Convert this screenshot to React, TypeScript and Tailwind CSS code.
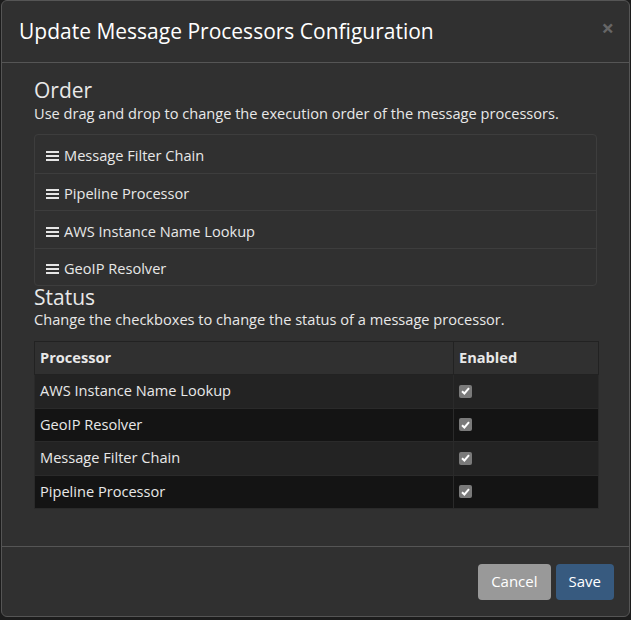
import React from "react";

const ORDER = ["Message Filter Chain", "Pipeline Processor", "AWS Instance Name Lookup", "GeoIP Resolver"];
const STATUS = ["AWS Instance Name Lookup", "GeoIP Resolver", "Message Filter Chain", "Pipeline Processor"];

function Bars() {
  return (
    <svg width="13" height="12" viewBox="0 0 13 12" className="shrink-0">
      <rect x="0" y="1" width="13" height="2" fill="#e5e5e5" />
      <rect x="0" y="5" width="13" height="2" fill="#e5e5e5" />
      <rect x="0" y="9" width="13" height="2" fill="#e5e5e5" />
    </svg>
  );
}

function Check() {
  return (
    <span className="flex h-[13px] w-[13px] items-center justify-center rounded-[2px] bg-[#7a7a7a]">
      <svg width="9" height="8" viewBox="0 0 9 8">
        <path d="M1 4.2 L3.4 6.5 L8 1.2" stroke="#fff" strokeWidth="2" fill="none" />
      </svg>
    </span>
  );
}

export default function App() {
  return (
    <div className="h-[620px] w-[631px] bg-[#1c1c1c] text-[#e8e8e8]" style={{ fontFamily: '"Open Sans", sans-serif' }}>
      <div className="ml-[1px] flex h-[617px] w-[629px] flex-col rounded-[6px] border border-[#555] bg-[#303030]">
        {/* header */}
        <div className="flex h-[62px] items-center justify-between border-b border-[#555] pl-[17px] pr-[15px]">
          <h4 className="text-[21px] text-white">Update Message Processors Configuration</h4>
          <span className="-mt-[10px] text-[22px] font-bold leading-none text-[#666]">×</span>
        </div>

        {/* body */}
        <div className="flex-1 px-[32px] pt-[14px]">
          <h2 className="text-[21px] leading-[26px]">Order</h2>
          <p className="text-[14.6px] leading-[20px]">Use drag and drop to change the execution order of the message processors.</p>
          <ul className="mt-[11px] rounded-[4px] border border-[#3d3d3d]">
            {ORDER.map((name, i) => (
              <li key={name} className={`flex h-[37.5px] items-center gap-[5px] px-[11px] pt-[5px] text-[14.6px] ${i > 0 ? "border-t border-[#3d3d3d]" : ""}`}>
                <Bars />
                <span>{name}</span>
              </li>
            ))}
          </ul>

          <h2 className="-mt-[1px] text-[21px] leading-[25px]">Status</h2>
          <p className="text-[14.6px] leading-[19px]">Change the checkboxes to change the status of a message processor.</p>
          <table className="mt-[12px] w-[565px] border-collapse text-[14.6px]">
            <thead>
              <tr className="h-[33px] bg-[#303030]">
                <th className="border border-[#222] px-[5px] text-left font-bold">Processor</th>
                <th className="w-[145px] border border-[#222] px-[5px] text-left font-bold">Enabled</th>
              </tr>
            </thead>
            <tbody>
              {STATUS.map((name, i) => (
                <tr key={name} className={`h-[33.5px] ${i % 2 === 0 ? "bg-[#232323]" : "bg-[#141414]"}`}>
                  <td className="border border-[#2a2a2a] px-[5px]">{name}</td>
                  <td className="border border-[#2a2a2a] px-[5px]">
                    <Check />
                  </td>
                </tr>
              ))}
            </tbody>
          </table>
        </div>

        {/* footer */}
        <div className="flex h-[70px] items-center justify-end gap-[5px] border-t border-[#555] pr-[15px]">
          <button className="h-[36px] rounded-[4px] bg-[#999] px-[13px] text-[15px] text-white">Cancel</button>
          <button className="h-[36px] rounded-[4px] bg-[#375a7f] px-[13px] text-[15px] text-white">Save</button>
        </div>
      </div>
    </div>
  );
}
